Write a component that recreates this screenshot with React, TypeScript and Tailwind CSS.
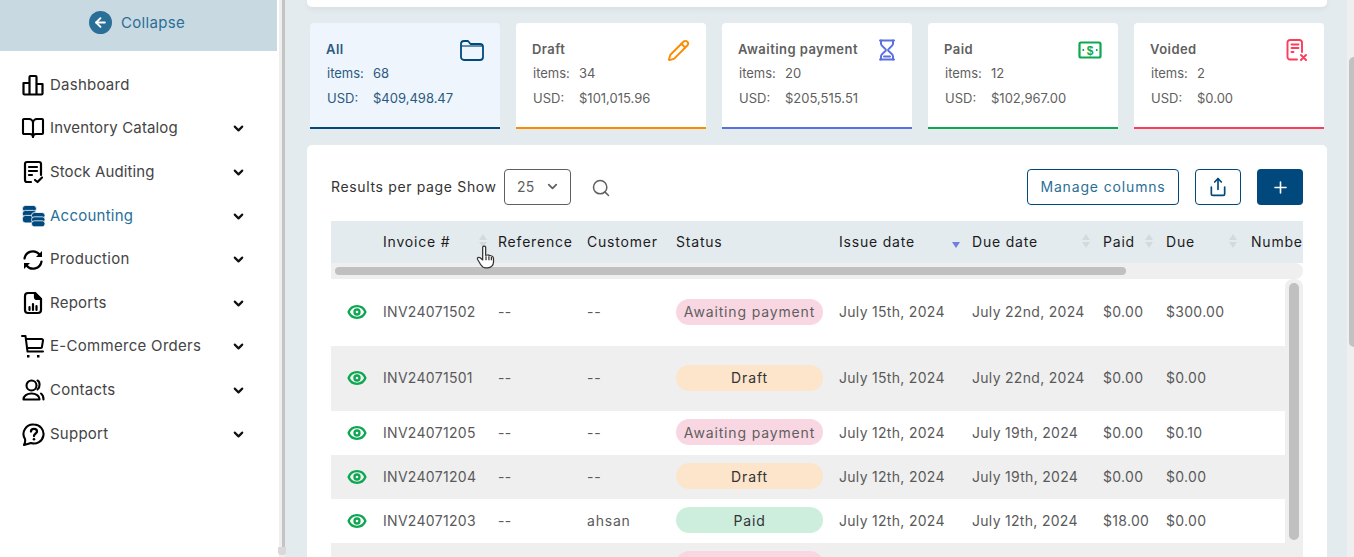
import React from "react";
import { ArrowLeft, BookOpen, ChevronDown, Eye, Pencil, Plus, Search, Share } from "lucide-react";

const Dash = () => (
  <svg width="22" height="22" viewBox="0 0 22 22" fill="none" stroke="currentColor" strokeWidth="2.2" strokeLinejoin="round">
    <path d="M1.500 9h6v11.500h-5a1 1 0 0 1-1-1zM7.500 3a1 1 0 0 1 1-1h5a1 1 0 0 1 1 1v17.500h-7zM14.500 10h6v9.500a1 1 0 0 1-1 1h-5z" />
  </svg>
);
const Audit = () => (
  <svg width="22" height="24" viewBox="0 0 22 24" fill="none" stroke="currentColor" strokeWidth="2.2" strokeLinecap="round" strokeLinejoin="round">
    <path d="M9 22H5a2 2 0 0 1-2-2V4a2 2 0 0 1 2-2h12a2 2 0 0 1 2 2v11" />
    <path d="M7 7h8M7 11h8M7 15h3M13 20l2.500 2 4.500-4.500" />
  </svg>
);
const Coins = () => (
  <svg width="23" height="22" viewBox="0 0 23 22" fill="#01497c" stroke="#ffffff" strokeWidth="0.800">
    <rect x="0.400" y="0.400" width="14" height="6.500" rx="3.200" />
    <rect x="0.400" y="5.400" width="14" height="6.500" rx="3" />
    <rect x="0.400" y="10.400" width="14" height="7.500" rx="3" />
    <rect x="9.500" y="7.500" width="13.500" height="6" rx="3" />
    <rect x="9.500" y="11.800" width="13.500" height="5.800" rx="2.800" />
    <rect x="9.500" y="15.800" width="13.500" height="6" rx="2.800" />
  </svg>
);
const Spin = () => (
  <svg width="22" height="22" viewBox="0 0 22 22" fill="none" stroke="currentColor" strokeWidth="2.200" strokeLinecap="round">
    <path d="M2.500 9.500A8.500 8.500 0 0 1 17.500 5.500" />
    <path d="M19.500 12.500A8.500 8.500 0 0 1 4.500 16.500" />
    <path d="M20 2v6h-6z" fill="currentColor" stroke="none" />
    <path d="M2 20v-6h6z" fill="currentColor" stroke="none" />
  </svg>
);
const Report = () => (
  <svg width="22" height="24" viewBox="0 0 22 24" fill="none" stroke="currentColor" strokeWidth="2.200" strokeLinecap="round" strokeLinejoin="round">
    <path d="M13 2H6a3 3 0 0 0-3 3v14a3 3 0 0 0 3 3h10a3 3 0 0 0 3-3V8z" />
    <path d="M13 2v4a2 2 0 0 0 2 2h4z" fill="currentColor" />
    <path d="M7.500 19v-3M11 19v-6M14.500 19v-4" />
  </svg>
);
const Cart = () => (
  <svg width="24" height="23" viewBox="0 0 24 23" fill="none" stroke="currentColor" strokeWidth="2" strokeLinecap="round" strokeLinejoin="round">
    <path d="M1 1h3.500L6.500 16.500H22" />
    <path d="M5 4h15.500a1.500 1.500 0 0 1 1.500 1.500l-1 6a1.500 1.500 0 0 1-1.500 1.500H6" />
    <rect x="6" y="20" width="2.500" height="2.500" fill="currentColor" stroke="none" />
    <rect x="16" y="20" width="2.500" height="2.500" fill="currentColor" stroke="none" />
  </svg>
);
const People = () => (
  <svg width="23" height="22" viewBox="0 0 23 22" fill="none" stroke="currentColor" strokeWidth="2.100" strokeLinecap="round" strokeLinejoin="round">
    <circle cx="9.500" cy="6.500" r="5" />
    <path d="M1.500 20.500c0-3.500 3.500-6 8-6s8 2.500 8 5.500v.5z" />
    <path d="M15.500 1.500c2.500 1 3 6.500 0 9M19 14.500c1.500 1 2.500 3 2.500 6" />
  </svg>
);
const Help = () => (
  <svg width="23" height="23" viewBox="0 0 23 23" fill="none" stroke="currentColor" strokeWidth="2.100" strokeLinejoin="round">
    <path d="M12 1.500a9.500 9.500 0 1 1-3 18.500l-7 2c1-2 1.500-4 1-6A9.500 9.500 0 0 1 12 1.500z" />
    <path d="M9 8.500c0-3.500 6-3.500 6 0 0 2-3 2-3 4.500" strokeWidth="2.300" strokeLinecap="round" />
    <circle cx="12" cy="16.300" r="1.300" fill="currentColor" stroke="none" />
  </svg>
);
const FolderIcon = () => (
  <svg width="24" height="21" viewBox="0 0 24 21" fill="none" stroke="#01497c" strokeWidth="1.800" strokeLinejoin="round">
    <path d="M1 4a3 3 0 0 1 3-3h4l2.500 3H20a3 3 0 0 1 3 3v10a3 3 0 0 1-3 3H4a3 3 0 0 1-3-3z" />
    <path d="M1 6h22" strokeWidth="1.200" />
  </svg>
);
const Glass = () => (
  <svg width="18" height="22" viewBox="0 0 18 22" fill="none" stroke="#5a70e0" strokeWidth="2" strokeLinejoin="round" strokeLinecap="round">
    <path d="M2 1.500h14M2 20.500h14" />
    <path d="M3 1.500v3.500c0 2 5 4.500 5 6s-5 4-5 6v3.500M15 1.500v3.500c0 2-5 4.500-5 6s5 4 5 6v3.500" />
    <path d="M6 17.500h6" />
  </svg>
);
const Money = () => (
  <svg width="24" height="18" viewBox="0 0 24 18" fill="none" stroke="#0ca750" strokeWidth="2.200">
    <rect x="1.500" y="1.500" width="21" height="15" rx="1.500" />
    <text x="12" y="13.800" textAnchor="middle" fontSize="12" fontWeight="700" fill="#0ca750" stroke="none" fontFamily="Liberation Sans, sans-serif">$</text>
    <path d="M4.500 9h1.600M17.900 9h1.600" />
  </svg>
);
const Voided = () => (
  <svg width="22" height="22" viewBox="0 0 22 22" fill="none" stroke="#ff3b5b" strokeWidth="1.900" strokeLinecap="round" strokeLinejoin="round">
    <path d="M11 20.500H4a2.500 2.500 0 0 1-2.500-2.500V3.500A2.500 2.500 0 0 1 4 1h9.500A2.500 2.500 0 0 1 16 3.500V13" />
    <path d="M5.500 5.500h7M5.500 9h7M5.500 13h2M15 16l5 5M20 16l-5 5" />
  </svg>
);

const nav = [
  { label: "Dashboard", icon: <Dash />, h: "h-[42px]", arrow: false, t: "tracking-[0.25px]" },
  { label: "Inventory Catalog", icon: <BookOpen size={24} strokeWidth={2.100} />, h: "h-[44px]", arrow: true, t: "tracking-[0.15px]" },
  { label: "Stock Auditing", icon: <Audit />, h: "h-[44px]", arrow: true, t: "tracking-[0.1px]" },
  { label: "Accounting", icon: <Coins />, h: "h-[44px]", arrow: true, active: true, t: "tracking-[0.25px]" },
  { label: "Production", icon: <Spin />, h: "h-[43px]", arrow: true, t: "tracking-[0.25px]" },
  { label: "Reports", icon: <Report />, h: "h-[44px]", arrow: true, t: "tracking-[0.25px]" },
  { label: "E-Commerce Orders", icon: <Cart />, h: "h-[43px]", arrow: true, t: "tracking-[0.3px]" },
  { label: "Contacts", icon: <People />, h: "h-[44px]", arrow: true, t: "tracking-[0.25px]" },
  { label: "Support", icon: <Help />, h: "h-[44px]", arrow: true, t: "tracking-[0.25px]" },
];

const cards = [
  { title: "All", items: "68", usd: "$409,498.47", icon: <FolderIcon />, bar: "border-[#01497c]", bg: "bg-[#eff5fc]", text: "text-[#2b5a80]" },
  { title: "Draft", items: "34", usd: "$101,015.96", icon: <Pencil size={23} strokeWidth={2} className="text-[#fb8c00]" />, bar: "border-[#fb8c00]", bg: "bg-white", text: "text-[#5f5f5f]" },
  { title: "Awaiting payment", items: "20", usd: "$205,515.51", icon: <Glass />, bar: "border-[#5a70e0]", bg: "bg-white", text: "text-[#5f5f5f]" },
  { title: "Paid", items: "12", usd: "$102,967.00", icon: <Money />, bar: "border-[#0ca750]", bg: "bg-white", text: "text-[#5f5f5f]" },
  { title: "Voided", items: "2", usd: "$0.00", icon: <Voided />, bar: "border-[#ff3b5b]", bg: "bg-white", text: "text-[#5f5f5f]" },
];

const cols = "grid grid-cols-[52px_115px_89px_89px_163px_133px_131px_63px_85px_52px] items-center pb-[2px]";

const pill: Record<string, string> = {
  "Awaiting payment": "bg-[#f8d7e3] text-[#5f5f5f]",
  Draft: "bg-[#fde5cc] text-[#333333]",
  Paid: "bg-[#cdeedd] text-[#333333]",
};

const rows = [
  { h: "h-[67px]", inv: "INV24071502", cust: "--", st: "Awaiting payment", iss: "July 15th, 2024", due: "July 22nd, 2024", paid: "$0.00", dueAmt: "$300.00", g: false },
  { h: "h-[65px]", inv: "INV24071501", cust: "--", st: "Draft", iss: "July 15th, 2024", due: "July 22nd, 2024", paid: "$0.00", dueAmt: "$0.00", g: true },
  { h: "h-[44px]", inv: "INV24071205", cust: "--", st: "Awaiting payment", iss: "July 12th, 2024", due: "July 19th, 2024", paid: "$0.00", dueAmt: "$0.10", g: false },
  { h: "h-[44px]", inv: "INV24071204", cust: "--", st: "Draft", iss: "July 12th, 2024", due: "July 19th, 2024", paid: "$0.00", dueAmt: "$0.00", g: true },
  { h: "h-[44px]", inv: "INV24071203", cust: "ahsan", st: "Paid", iss: "July 12th, 2024", due: "July 12th, 2024", paid: "$18.00", dueAmt: "$0.00", g: false },
  { h: "h-[44px]", inv: "", cust: "", st: "", iss: "", due: "", paid: "", dueAmt: "", g: true },
];

const Sort = ({ down }: { down?: boolean }) => (
  <span className="inline-flex flex-col gap-[2px]">
    <span className={`h-0 w-0 border-x-[4px] border-b-[6px] border-x-transparent ${down ? "border-b-transparent" : "border-b-[#d5d9dc]"}`} />
    <span className={`h-0 w-0 border-x-[4px] border-t-[6px] border-x-transparent ${down ? "border-t-[#6f7fdc]" : "border-t-[#d5d9dc]"}`} />
  </span>
);

const headers: [string, boolean, string][] = [
  ["", false, ""],
  ["Invoice #", true, "w-[104px]"],
  ["Reference", false, ""],
  ["Customer", false, ""],
  ["Status", false, ""],
  ["Issue date", true, "w-[121px] down"],
  ["Due date", true, "w-[118px]"],
  ["Paid", true, "w-[50px]"],
  ["Due", true, "w-[71px]"],
  ["Number", false, ""],
];

export default function App() {
  return (
    <div className="relative flex h-[557px] w-[1354px] overflow-hidden bg-[#e4ebef] font-['Inter','Liberation_Sans',sans-serif] text-[14px] tracking-[0.3px]">
      <aside className="relative flex h-full w-[285px] shrink-0 flex-col bg-white">
        <div className="flex h-[51px] w-[277px] items-center justify-center gap-[9px] bg-[#c9d9e2] pb-[6px] text-[#2a6f97]">
          <span className="-ml-[3px] flex h-[23px] w-[23px] items-center justify-center rounded-full bg-[#2a6f97] text-white">
            <ArrowLeft size={15} strokeWidth={3} />
          </span>
          <span className="mt-[2px] text-[15px] tracking-[0.3px]">Collapse</span>
        </div>
        <nav className="flex w-[277px] flex-col pt-[13px]">
          {nav.map((n) => (
            <div key={n.label} className={`flex ${n.h} items-center pl-[21px] pr-[31px] ${n.active ? "text-[#01497c]" : "text-black"}`}>
              <span className="flex w-[24px] justify-center">{n.icon}</span>
              <span className={`ml-[5px] flex-1 text-[15px] ${n.t} ${n.active ? "text-[#2a6f97]" : "text-[#444444]"}`}>{n.label}</span>
              {n.arrow && <ChevronDown size={15} strokeWidth={3.400} className="text-[#111111]" />}
            </div>
          ))}
        </nav>
        <div className="absolute bottom-0 right-0 top-0 w-[6px] bg-[#efefef]">
          <div className="ml-[3px] h-[547px] w-[3px] bg-[#c4c4c4]" />
          <div className="-ml-[1px] h-[8px] w-[8px] rounded-b-[3px] bg-[#d9d9d9]" />
        </div>
      </aside>

      <main className="flex min-w-0 flex-1 flex-col">
        <div className="ml-[22px] h-[7px] w-[1020px] shrink-0 rounded-b-[5px] bg-white shadow-[0_2px_6px_rgba(0,0,0,0.06)]" />
        <div className="ml-[25px] mt-[16px] flex shrink-0 gap-[16px]">
          {cards.map((c) => (
            <div key={c.title} className={`flex h-[106px] w-[190px] flex-col rounded-t-[4px] border-b-2 pl-[16px] pr-[16px] pt-[18px] tracking-normal ${c.bar} ${c.bg} ${c.text}`}>
              <div className="flex h-[18px] items-center justify-between">
                <span className="text-[13px] font-semibold tracking-[0.45px]">{c.title}</span>
                <span className="flex">{c.icon}</span>
              </div>
              <div className="ml-px mt-[6px] flex h-[18px] items-center text-[13px]">
                <span className="w-[46px]">items:</span>{c.items}
              </div>
              <div className="ml-px mt-[7px] flex h-[18px] items-center text-[13px]">
                <span className="w-[46px]">USD:</span>{c.usd}
              </div>
            </div>
          ))}
        </div>
        <section className="ml-[22px] mt-[16px] w-[1020px] flex-1 rounded-t-[5px] bg-white px-[24px] pt-[24px]">
          <div className="flex h-[36px] items-center text-[#333333]">
            <span className="w-[173px] pb-[2px] text-[14px] tracking-[0.65px]">Results per page Show</span>
            <div className="flex h-[36px] w-[67px] items-center justify-between rounded-[4px] border border-[#5f5f5f] pb-[1px] pl-[12px] pr-[10px] text-[#5f5f5f]">
              <span>25</span>
              <ChevronDown size={15} strokeWidth={2.800} />
            </div>
            <Search size={20} strokeWidth={1.800} className="ml-[20px] mt-[2px] text-[#5f5f5f]" />
            <div className="ml-auto flex h-[36px] w-[152px] items-center justify-center rounded-[4px] border border-[#01497c] pb-[2px] tracking-[0.85px] text-[#2a6f97]">Manage columns</div>
            <div className="ml-[16px] flex h-[36px] w-[46px] items-center justify-center rounded-[4px] border border-[#01497c] text-[#01497c]"><Share size={20} strokeWidth={2} /></div>
            <div className="ml-[16px] flex h-[36px] w-[46px] items-center justify-center rounded-[4px] bg-[#01497c] text-white"><Plus size={19} strokeWidth={2} /></div>
          </div>

          <div className="relative mt-[16px] w-[972px] overflow-hidden">
            <div className={`${cols} h-[42px] bg-[#e4ebef] tracking-[0.8px] text-[#1c1c1c]`}>
              {headers.map(([h, sort, w]) => (
                <div key={h || "eye"} className="whitespace-nowrap">
                  {sort ? (
                    <span className={`flex items-center justify-between ${w.split(" ")[0]}`}>
                      {h}
                      <Sort down={w.includes("down")} />
                    </span>
                  ) : h}
                </div>
              ))}
            </div>
            <div className="flex h-[16px] items-center rounded-r-full bg-[#efefef] pl-[4px]">
              <div className="h-[8px] w-[791px] rounded-full bg-[#c0c0c0]" />
            </div>
            {rows.map((r, i) => (
              <div key={i} className={`${cols} ${r.h} text-[#5a5a5a] ${r.g ? "bg-[#efefef]" : "bg-white"}`}>
                <div className="mt-[1px] flex pl-[16px]">{r.inv && <Eye size={20} strokeWidth={2.800} className="text-[#0ca750]" />}</div>
                <div>{r.inv}</div>
                <div>{r.inv && "--"}</div>
                <div className="tracking-[0.8px]">{r.cust}</div>
                <div className={`flex h-[26px] w-[147px] items-center justify-center rounded-full tracking-[0.85px] ${r.st ? pill[r.st] : "bg-[#f8d7e3]"}`}>{r.st}</div>
                <div className="whitespace-nowrap">{r.iss}</div>
                <div className="whitespace-nowrap">{r.due}</div>
                <div>{r.paid}</div>
                <div>{r.dueAmt}</div>
                <div />
              </div>
            ))}
            <div className="absolute bottom-0 right-0 top-[58px] w-[18px] rounded-t-[8px] bg-[#efefef]">
              <div className="ml-[4px] mt-[4px] h-[257px] w-[10px] rounded-full bg-[#c0c0c0]" />
            </div>
            <svg width="20" height="26" viewBox="0 0 24 30" className="absolute left-[145px] top-[23px]" fill="#fff" stroke="#333" strokeWidth="1.500" strokeLinejoin="round">
              <path d="M8 3a2 2 0 0 1 3.600 0v10l2-.4a2 2 0 0 1 2 .5l2.400.4c2 .4 3 1.500 3 3.500V21c0 4-3 7-7 7h-2c-3 0-5-1.500-6.500-4L2 18c-1-2 1-3.500 3-2l3 2.500z" />
              <path d="M12 14v5M15.500 14v5M18.500 15v4" fill="none" />
            </svg>
          </div>
        </section>
      </main>
      <div className="absolute right-0 top-0 h-[557px] w-[7px] bg-[#efefef]">
        <div className="ml-[2px] mt-[57px] h-[290px] w-[5px] rounded-l-full bg-[#c1c1c1]" />
      </div>
    </div>
  );
}
